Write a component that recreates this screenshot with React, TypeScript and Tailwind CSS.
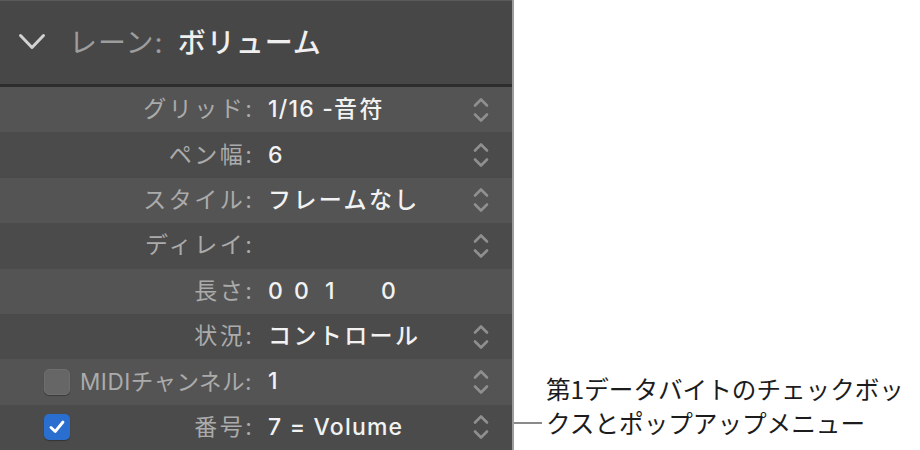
import React from "react";

const font = { fontFamily: '"Inter", "Noto Sans CJK JP", sans-serif' };

function Stepper() {
  return (
    <svg width="18" height="28" viewBox="0 0 18 28" fill="none" className="shrink-0">
      <path d="M3 9.5 L9 3.5 L15 9.5" stroke="#8f8f8f" strokeWidth="2.6" strokeLinecap="round" strokeLinejoin="round" />
      <path d="M3 18.5 L9 24.5 L15 18.5" stroke="#8f8f8f" strokeWidth="2.6" strokeLinecap="round" strokeLinejoin="round" />
    </svg>
  );
}

function Checkbox({ checked }: { checked: boolean }) {
  if (checked) {
    return (
      <div className="w-[26px] h-[26px] shrink-0 rounded-[5px] bg-[#2a6fd0] flex items-center justify-center shadow-[0_1px_1px_rgba(0,0,0,0.3)]">
        <svg width="18" height="16" viewBox="0 0 18 16" fill="none">
          <path d="M3 8.5 L7.2 12.5 L15 3" stroke="white" strokeWidth="2.8" strokeLinecap="round" strokeLinejoin="round" />
        </svg>
      </div>
    );
  }
  return <div className="w-[26px] h-[26px] shrink-0 rounded-[5px] bg-[#666666] border border-[#6e6e6e] shadow-[0_1px_1px_rgba(0,0,0,0.3)]" />;
}

type Row = {
  label: string;
  value?: React.ReactNode;
  stepper?: boolean;
  checkbox?: boolean | null;
  tight?: boolean;
};

const jp = (s: string) => <span className="tracking-[2.4px]">{s}</span>;

const rows: Row[] = [
  { label: "グリッド:", value: <>1/16 -{jp("音符")}</>, stepper: true },
  { label: "ペン幅:", value: "6", stepper: true },
  { label: "スタイル:", value: jp("フレームなし"), stepper: true },
  { label: "ディレイ:", value: "", stepper: true },
  {
    label: "長さ:",
    value: (
      <span className="flex">
        <span className="w-[26px]">0</span>
        <span className="w-[31px]">0</span>
        <span className="w-[56px]">1</span>
        <span>0</span>
      </span>
    ),
    stepper: false,
  },
  { label: "状況:", value: jp("コントロール"), stepper: true },
  { label: "MIDIチャンネル:", value: "1", stepper: true, checkbox: false, tight: true },
  { label: "番号:", value: "7 = Volume", stepper: true, checkbox: true },
];

export default function App() {
  return (
    <div className="w-[920px] h-[450px] bg-white flex overflow-hidden relative" style={font}>
      <div className="w-[514px] h-full flex flex-col bg-[#4c4c4c] border-r-2 border-[#9c9c9c] shrink-0">
        <div className="h-[84px] shrink-0 bg-[#474747] border-t border-[#5a5a5a] flex items-center pl-[18px]">
          <svg width="28" height="18" viewBox="0 0 28 18" fill="none" className="mt-[-2px]">
            <path d="M2.5 2.5 L14 14.5 L25.5 2.5" stroke="#d2d2d2" strokeWidth="3" strokeLinecap="round" strokeLinejoin="round" />
          </svg>
          <span className="ml-[23px] text-[28px] tracking-[1px] text-[#9d9d9d] leading-none">レーン:</span>
          <span className="ml-[14px] text-[28px] tracking-[1px] text-[#efefef] font-medium leading-none">ボリューム</span>
        </div>
        <div className="h-[3px] shrink-0 bg-[#2e2e2e]" />
        <div className="flex-1 flex flex-col">
          {rows.map((r, i) => (
            <div
              key={i}
              className={`flex-1 flex items-center pr-[22px] ${i % 2 === 0 ? "bg-[#545454]" : "bg-[#4b4b4b]"}`}
            >
              <div className="w-[252px] shrink-0 flex items-center pl-[44px]">
                {r.checkbox !== undefined && r.checkbox !== null ? <Checkbox checked={r.checkbox} /> : null}
                {r.tight ? (
                  <span className="ml-auto text-[22.5px] tracking-[0.5px] text-[#ababab] leading-none whitespace-nowrap">{r.label}</span>
                ) : (
                  <span className="ml-auto text-[23px] tracking-[2.5px] mr-[-2.5px] text-[#ababab] leading-none whitespace-nowrap">{r.label}</span>
                )}
              </div>
              <div className="ml-[16px] flex-1 text-[23px] tracking-[1.2px] text-[#f2f2f2] font-medium leading-none whitespace-nowrap">
                {r.value}
              </div>
              <div className="w-[18px] h-[28px] flex items-center justify-center">{r.stepper ? <Stepper /> : null}</div>
            </div>
          ))}
        </div>
      </div>
      <div className="flex flex-col justify-end pb-[11px]">
        <div className="flex items-start">
          <div className="w-[28px] h-[2px] bg-[#8a8a8a] mt-[51px] shrink-0" />
          <div
            className="ml-[4px] text-[24.6px] leading-[34px] text-[#1c1c1c] whitespace-nowrap"
            style={{ fontFamily: '"Noto Sans CJK JP", sans-serif' }}
          >
            第1データバイトのチェックボッ
            <br />
            クスとポップアップメニュー
          </div>
        </div>
      </div>
    </div>
  );
}
